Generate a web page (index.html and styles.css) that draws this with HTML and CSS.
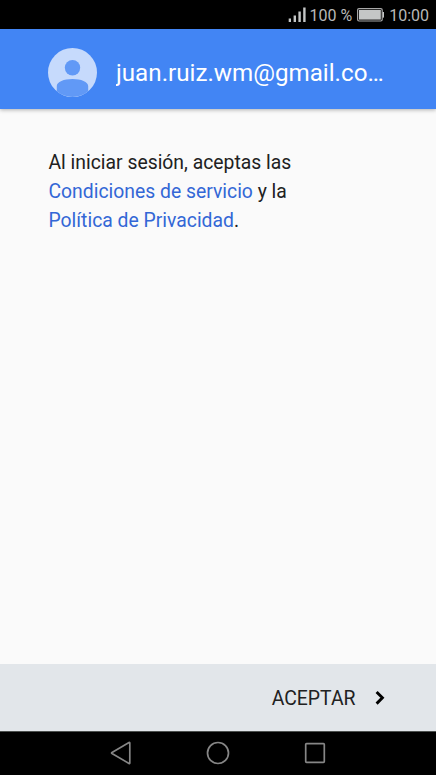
FILE: index.html
```html
<!DOCTYPE html>
<html lang="es">
<head>
    <meta charset="UTF-8">
    <meta name="viewport" content="width=device-width, initial-scale=1.0">
    <title>Condiciones de servicio</title>
    <link rel="stylesheet" href="styles.css">
</head>
<body>
    <div class="status-bar">
        <svg class="signal" width="18" height="15" viewBox="0 0 18 15">
            <path d="M.7 11.6H3V15H.7zM5.6 8.4H8V15H5.6zM10.4 4.6h2.4V15h-2.4zM15.2.4h2.4V15h-2.4z"/>
        </svg>
        <span class="percent">100 %</span>
        <svg class="battery" width="27" height="14" viewBox="0 0 27 14">
            <rect class="battery-case" x="0.6" y="0.6" width="24.6" height="12.4" rx="1.4"/>
            <rect x="2" y="2" width="21.8" height="9.6"/>
            <rect x="25.6" y="4" width="1.4" height="5.6"/>
        </svg>
        <span class="clock">10:00</span>
    </div>

    <header>
        <svg class="avatar" width="49" height="49" viewBox="0 0 49 49">
            <circle class="avatar-back" cx="24.5" cy="24.5" r="24.5"/>
            <circle cx="24.5" cy="19.7" r="7.7"/>
            <path d="M8.8 43.3V38C8.8 33.8 16 31 24.5 31s15.7 2.8 15.7 7v5.3a24.5 24.5 0 0 1-31.4 0z"/>
        </svg>
        <h1>juan.ruiz.wm@gmail.com</h1>
    </header>

    <main>
        <p>Al iniciar sesión, aceptas las<br>
        <a href="#">Condiciones de servicio</a> y la<br>
        <a href="#">Política de Privacidad</a>.</p>
    </main>

    <footer>
        <button class="accept-button"><span>ACEPTAR</span>
            <svg width="10" height="16" viewBox="0 0 10 16">
                <path d="M1.6 2L7.4 7.8l-5.8 5.8"/>
            </svg>
        </button>
    </footer>

    <nav>
        <svg width="22" height="24" viewBox="0 0 22 24">
            <path d="M19.8 2v20q0 .8-.8.4L2 12.6q-.9-.6 0-1.2L19 1.6q.8-.4.8.4z"/>
        </svg>
        <svg width="24" height="24" viewBox="0 0 24 24">
            <circle cx="12" cy="12" r="10.5"/>
        </svg>
        <svg width="22" height="22" viewBox="0 0 22 22">
            <rect x="1.7" y="1.7" width="18.6" height="18.6" rx="0.8"/>
        </svg>
    </nav>
</body>
</html>
```

FILE: styles.css
```css
body {
  margin: 0;
  height: 775px;
  display: flex;
  flex-direction: column;
  background-color: #fafafa;
  color: #212121;
  font-family: Roboto, "Liberation Sans", sans-serif;
}

/* Status bar */
.status-bar {
  display: flex;
  justify-content: flex-end;
  align-items: center;
  height: 29px;
  padding: 1px 7px 0 0;
  box-sizing: border-box;
  background-color: #000;
  color: #b8b8b8;
  fill: #c4c6c6;
  font-size: 16px;
}

.signal {
  margin-bottom: 1px;
}

.percent {
  margin: 0 5px 0 3px;
}

.battery-case {
  fill: none;
  stroke: #a8a8a8;
  stroke-width: 1.2;
}

.clock {
  margin-left: 5px;
}

/* Account header */
header {
  display: flex;
  align-items: center;
  height: 80px;
  padding: 8px 48px 0;
  box-sizing: border-box;
  background-color: #4285f4;
  box-shadow: 0 1px 4px rgba(0,0,0,0.3);
}

.avatar {
  flex: none;
  margin: 0 19px 1px 0;
  fill: #6199f6;
}

.avatar .avatar-back {
  fill: #c6dafc;
}

header h1 {
  margin: 0;
  min-width: 0;
  overflow: hidden;
  white-space: nowrap;
  text-overflow: ellipsis;
  color: white;
  font-size: 24.2px;
  font-weight: 400;
}

main {
  flex: 1;
  padding: 39px 48.5px;
}

main p {
  margin: 0;
  font-size: 19.35px;
  line-height: 29px;
}

main a {
  color: #3367d6;
  text-decoration: none;
}

/* Bottom action */
footer {
  display: flex;
  justify-content: flex-end;
  align-items: center;
  height: 67px;
  padding-right: 51px;
  background-color: #e2e6ea;
}

.accept-button {
  display: flex;
  align-items: center;
  gap: 19.5px;
  padding: 0;
  border: none;
  background: none;
  color: #212121;
  font-family: inherit;
  font-size: 19.4px;
  cursor: pointer;
}

.accept-button span {
  padding-top: 2px;
}

.accept-button path {
  fill: none;
  stroke: #000;
  stroke-width: 2.9;
}

/* Android navigation */
nav {
  display: flex;
  justify-content: center;
  align-items: center;
  gap: 74px;
  height: 44px;
  padding-bottom: 1px;
  box-sizing: border-box;
  border-top: 1px solid #4c504e;
  background-color: #000;
}

nav svg {
  fill: none;
  stroke: #868686;
  stroke-width: 1.7;
}
```
